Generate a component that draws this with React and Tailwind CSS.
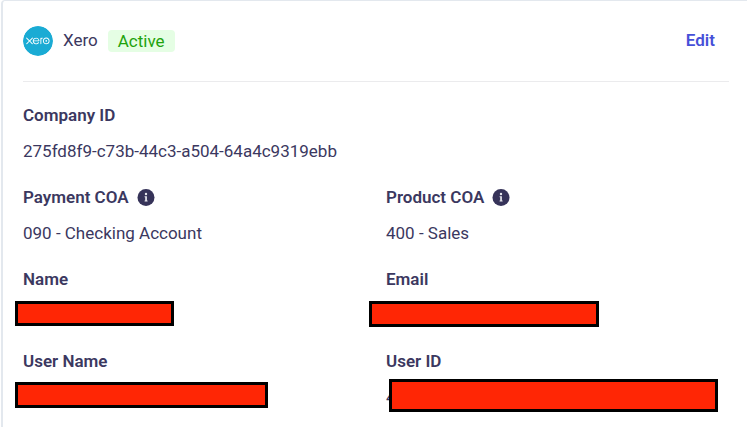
import React from 'react';
import { SiXero } from "react-icons/si";

function InfoIcon() {
    return (
        <svg viewBox="0 0 18 18" className="size-[18px]" aria-hidden="true">
            <circle cx="9" cy="9.5" r="8.5" fill="#363359" />
            <circle cx="9" cy="6" r="1.2" fill="#e9e9ef" />
            <path d="M7.6 8.2h2.3v4.2h0.7v1.1H7.6v-1.1h0.6V9.2h-0.6z" fill="#e9e9ef" />
        </svg>
    );
}

function Field({label, info, className = "", children}) {
    return (
        <div className={className}>
            <dt className="flex items-center gap-2 font-semibold leading-6">
                {label}
                {info && (
                    <button type="button" aria-label={`About ${label}`}>
                        <InfoIcon />
                    </button>
                )}
            </dt>
            <dd className="relative mt-3 h-6 leading-6">{children}</dd>
        </div>
    );
}

// Solid bar laid over a hidden value
function Redaction({className}) {
    return <span className={`absolute border-3 border-black bg-[#ff2605] ${className}`} />;
}

export default function App() {
    return (
        <div className="min-h-screen overflow-hidden bg-white pl-px font-[Roboto,sans-serif] text-[17px] text-[#3b3860]">
            <section className="min-h-screen rounded-tl-sm border-t border-l-2 border-[#e3e8ee] pr-[18px] pl-5">
                <header className="flex h-[81px] items-center border-b border-[#ebebed] pr-3.5">
                    <SiXero className="size-[30px] rounded-full bg-white text-[#1aabd4]" />
                    <h2 className="ml-2.5">Xero</h2>
                    <span className="ml-2.5 rounded-sm bg-[#e5fee4] px-2.5 leading-[22px] text-[#1fa30d]">Active</span>
                    <button type="button" className="ml-auto font-semibold text-[#4650d8]">Edit</button>
                </header>

                <dl className="grid grid-cols-2 gap-x-5 gap-y-[22px] pt-[21px]">
                    <Field label="Company ID" className="col-span-2">
                        275fd8f9-c73b-44c3-a504-64a4c9319ebb
                    </Field>
                    <Field label="Payment COA" info>090 - Checking Account</Field>
                    <Field label="Product COA" info>400 - Sales</Field>
                    <Field label="Name">
                        <Redaction className="-top-0.5 -left-2 h-[25px] w-[159px]" />
                    </Field>
                    <Field label="Email">
                        <Redaction className="-top-0.5 -left-[17px] h-[26px] w-[230px]" />
                    </Field>
                    <Field label="User Name">
                        <Redaction className="-top-[3px] -left-2 h-[26px] w-[253px]" />
                    </Field>
                    <Field label="User ID">
                        4
                        <Redaction className="-top-1.5 left-[3px] h-[33px] w-[329px]" />
                    </Field>
                </dl>
            </section>
        </div>
    );
}
